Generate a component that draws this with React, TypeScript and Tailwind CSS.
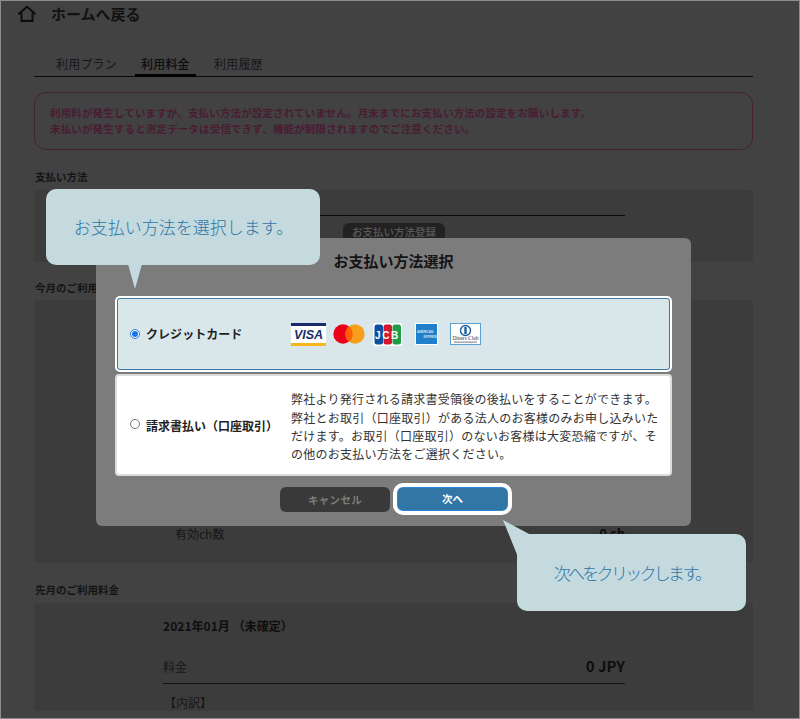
import React from "react";

function Visa() {
  return (
    <svg width="35" height="23" viewBox="0 0 35 23">
      <rect width="35" height="23" fill="#fff" />
      <rect width="35" height="3" fill="#1a2a6c" />
      <rect y="20" width="35" height="3" fill="#f9b51c" />
      <text x="17.5" y="16" textAnchor="middle" fontFamily="'Liberation Sans',sans-serif" fontSize="12.5" fontWeight="700" fontStyle="italic" fill="#1a2f6e">VISA</text>
    </svg>
  );
}
function Master() {
  return (
    <svg width="32" height="20" viewBox="0 0 32 20">
      <circle cx="10" cy="10" r="9.7" fill="#eb001b" />
      <circle cx="22" cy="10" r="9.7" fill="#f79e1b" />
      <path d="M16 2.4a9.7 9.7 0 0 1 0 15.2a9.7 9.7 0 0 1 0-15.2z" fill="#ff5f00" />
    </svg>
  );
}
function Jcb() {
  return (
    <svg width="29" height="23" viewBox="0 0 29 23">
      <rect width="29" height="23" rx="2" fill="#fff" />
      <rect x="1.5" y="1.5" width="8.5" height="20" rx="2.5" fill="#0d4f9e" />
      <rect x="10.5" y="1.5" width="8.5" height="20" rx="2.5" fill="#d3172e" />
      <rect x="19.5" y="1.5" width="8.5" height="20" rx="2.5" fill="#1f9c46" />
      <text x="14.5" y="15.5" textAnchor="middle" fontFamily="'Liberation Sans',sans-serif" fontSize="10" fontWeight="700" fill="#fff" letterSpacing="1.6">JCB</text>
    </svg>
  );
}
function Amex() {
  return (
    <svg width="23" height="22" viewBox="0 0 23 22">
      <rect width="23" height="22" fill="#fff" />
      <rect x="1" y="1" width="21" height="20" fill="#1f7fcb" />
      <text x="2" y="9.500" fontFamily="'Liberation Sans',sans-serif" fontSize="3" fontWeight="700" fill="#d5e8f5">AMERICAN</text>
      <text x="8.500" y="14.500" fontFamily="'Liberation Sans',sans-serif" fontSize="3" fontWeight="700" fill="#d5e8f5">EXPRESS</text>
    </svg>
  );
}
function Diners() {
  return (
    <svg width="31" height="22" viewBox="0 0 31 22">
      <rect x="0.5" y="0.5" width="30" height="21" fill="#fff" stroke="#5aa0d0" />
      <circle cx="15.5" cy="7.5" r="5" fill="#fff" stroke="#1a5e9e" strokeWidth="1.4" />
      <rect x="14.3" y="4" width="2.4" height="7" fill="#1a5e9e" />
      <text x="15.5" y="17" textAnchor="middle" fontFamily="'Liberation Serif',serif" fontSize="5.4" fill="#334">Diners Club</text>
      <rect x="4" y="18.6" width="23" height="1" fill="#778" />
    </svg>
  );
}

function Heading({ children }: { children: React.ReactNode }) {
  return <div className="ml-[1px] text-[10.5px] leading-[14px] font-bold text-[#141414]">{children}</div>;
}

export default function App() {
  return (
    <div className="relative h-[719px] w-[800px] overflow-hidden border border-[#8c8c8c] bg-[#424242] text-[#141414]">
      <div className="flex h-full flex-col font-['Noto_Sans_CJK_JP','Noto_Sans',sans-serif]">
        {/* header */}
        <div className="flex h-[26px] items-center pl-[16px]">
          <svg width="20" height="18" viewBox="0 0 20 18" fill="none" stroke="#0c0c0c" strokeWidth="2">
            <path d="M1.5 9.2 10 1.8l8.500 7.400" />
            <path d="M4.500 8v8h11V8" />
            <path d="M4 15.800h12" />
          </svg>
          <span className="mb-[2px] ml-[14px] text-[15px] font-bold leading-none text-[#111]">ホームへ戻る</span>
        </div>

        <div className="ml-[33px] mr-[46px] flex flex-col">
          {/* tabs */}
          <div className="mt-[27px] flex h-[23px] border-b border-[#0a0a0a] pt-[1px] text-[12px] leading-[18px] tracking-[0.2px]">
            <span className="ml-[22px] w-[61px] text-[#161616]">利用プラン</span>
            <span className="relative ml-[24px] w-[49px] font-medium text-[#0e0e0e]">
              利用料金
              <span className="absolute -left-[6px] -right-[6px] bottom-[-1px] h-[3px] bg-black" />
            </span>
            <span className="ml-[24px] text-[#161616]">利用履歴</span>
          </div>

          {/* alert */}
          <div className="mt-[15px] flex h-[58px] flex-col justify-center rounded-[12px] border border-[#462230] pl-[15px] text-[10.5px] font-bold leading-[16px] tracking-[0.15px] text-[#4a1c33]">
            <div>利用料が発生していますが、支払い方法が設定されていません。月末までにお支払い方法の設定をお願いします。</div>
            <div>未払いが発生すると測定データは受信できず、機能が制限されますのでご注意ください。</div>
          </div>

          <div className="mt-[20px]"><Heading>支払い方法</Heading></div>
          <div className="mt-[6px] flex h-[72px] flex-col rounded-[3px] bg-[#3c3c3c] pl-[128px]">
            <div className="mt-[25px] h-px w-[463px] bg-[#0c0c0c]" />
            <div className="ml-[181px] mt-[7px] flex h-[26px] w-[102px] items-start justify-center rounded-[6px] bg-[#222] pt-[1px] text-[10.5px] font-medium text-[#5a5a5a]">
              お支払い方法登録
            </div>
          </div>

          <div className="mt-[19px]"><Heading>今月のご利用料金</Heading></div>
          <div className="mt-[5px] flex h-[263px] flex-col justify-end rounded-[3px] bg-[#3c3c3c] pb-[21px] pl-[141px] pr-[128px]">
            <div className="flex items-center justify-between text-[12px] leading-[16px] text-[#161616]">
              <span>有効ch数</span>
              <span className="text-[13px] font-bold text-[#0e0e0e]">0 ch</span>
            </div>
          </div>

          <div className="mt-[20px]"><Heading>先月のご利用料金</Heading></div>
          <div className="mt-[6px] flex flex-1 flex-col rounded-[3px] bg-[#3c3c3c] pl-[129px] pr-[128px] pt-[14px]">
            <div className="text-[12px] font-bold leading-[18px] tracking-[0.05px] text-[#0e0e0e]">2021年01月 （未確定）</div>
            <div className="mt-[21px] flex h-[28px] items-center justify-between border-b border-[#141414] pb-[6px] text-[12px] text-[#161616]">
              <span>料金</span>
              <span className="text-[15px] font-bold text-[#0e0e0e]">0 JPY</span>
            </div>
            <div className="mt-[11px] pl-[1px] text-[12px] leading-[16px] text-[#161616]">【内訳】</div>
          </div>
        </div>
      </div>

      {/* modal */}
      <div className="absolute left-[95px] top-[237px] flex h-[288px] w-[595px] flex-col rounded-[6px] bg-[#7c7c7c] font-['Noto_Sans_CJK_JP','Noto_Sans',sans-serif]">
        <div className="mt-[12px] h-[22px] text-center text-[15px] font-bold leading-[22px] text-[#141414]">お支払い方法選択</div>
        <div className="ml-[19px] mr-[19px] mt-[26px] flex flex-col gap-[4px]">
          <div className="mx-[2px] flex h-[72px] items-center rounded-[3px] border-[1px] border-[#3b7aa6] bg-[#d9e7ea] pl-[12px] outline-[2px] outline-white">
            <span className="flex h-[10px] w-[10px] items-center justify-center rounded-full border border-[#2b7de9] bg-white">
              <span className="h-[6px] w-[6px] rounded-full bg-[#1a73e8]" />
            </span>
            <span className="ml-[6px] w-[145px] text-[12px] font-bold tracking-[0.05px] text-[#222]">クレジットカード</span>
            <div className="flex items-center">
              <Visa />
              <span className="ml-[7px]"><Master /></span>
              <span className="ml-[8px]"><Jcb /></span>
              <span className="ml-[13px]"><Amex /></span>
              <span className="ml-[12px]"><Diners /></span>
            </div>
          </div>
          <div className="flex h-[102px] items-center rounded-[4px] border-[2px] border-[#dcdcdc] bg-white pl-[13px]">
            <span className="mb-[2px] h-[10px] w-[10px] rounded-full border border-[#767676] bg-white" />
            <span className="ml-[6px] w-[145px] whitespace-nowrap pt-[1px] text-[12px] font-bold text-[#222]">請求書払い（口座取引）</span>
            <div className="w-[375px] pt-[4px] text-[12px] leading-[18.4px] tracking-[0.25px] text-[#333]">
              弊社より発行される請求書受領後の後払いをすることができます。弊社とお取引（口座取引）がある法人のお客様のみお申し込みいただけます。お取引（口座取引）のないお客様は大変恐縮ですが、その他のお支払い方法をご選択ください。
            </div>
          </div>
        </div>
        <div className="ml-[184px] mt-[11px] flex items-start gap-[7px]">
          <div className="flex h-[25px] w-[110px] items-center justify-center rounded-[6px] bg-[#393939] text-[10.5px] font-bold tracking-[0.3px] text-[#7d7d7d]">キャンセル</div>
          <div className="flex h-[24px] w-[111px] items-center justify-center rounded-[6px] border border-[#2f86d8] bg-[#3276a5] text-[10.5px] font-bold text-white outline-[4px] outline-white">次へ</div>
        </div>
      </div>

      {/* callout 1 */}
      <div className="absolute left-[45px] top-[188px] flex h-[76px] w-[274px] items-center justify-center rounded-[10px] bg-[#c4dadf] pl-[1px] font-['Noto_Sans_CJK_JP','Noto_Sans',sans-serif] text-[17px] font-light text-[#2e74a4]">
        お支払い方法を選択します。
        <svg className="absolute left-[81px] top-[75px]" width="16" height="26" viewBox="0 0 16 26">
          <path d="M1 0h14L8 25z" fill="#c4dadf" />
        </svg>
      </div>

      {/* callout 2 */}
      <div className="absolute left-[516px] top-[533px] flex h-[77px] w-[229px] items-center justify-center rounded-[10px] bg-[#c4dadf] font-['Noto_Sans_CJK_JP','Noto_Sans',sans-serif] text-[17px] font-light tracking-[-2.7px] text-[#2e74a4]">
        次へをクリックします。
        <svg className="absolute -left-[15px] -top-[15px]" width="32" height="40" viewBox="0 0 32 40">
          <path d="M1 1 29 16 16 38z" fill="#c4dadf" />
        </svg>
      </div>
    </div>
  );
}
